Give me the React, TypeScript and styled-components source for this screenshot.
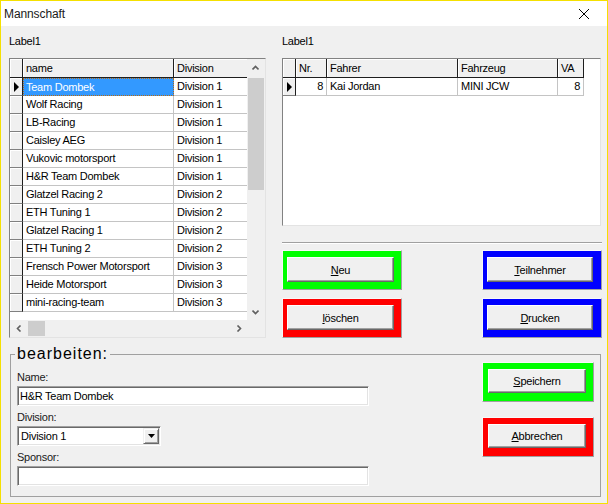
import React from 'react';
import styled, { createGlobalStyle } from 'styled-components';

const GlobalStyle = createGlobalStyle`
  html, body {
    margin: 0;
    padding: 0;
    background: #fff;
  }
  body {
    font-family: "Liberation Sans", Arial, sans-serif;
  }
  * {
    box-sizing: border-box;
  }
`;

const teams: [string, string][] = [
  ['Team Dombek', 'Division 1'],
  ['Wolf Racing', 'Division 1'],
  ['LB-Racing', 'Division 1'],
  ['Caisley AEG', 'Division 1'],
  ['Vukovic motorsport', 'Division 1'],
  ['H&R Team Dombek', 'Division 1'],
  ['Glatzel Racing 2', 'Division 2'],
  ['ETH Tuning 1', 'Division 2'],
  ['Glatzel Racing 1', 'Division 2'],
  ['ETH Tuning 2', 'Division 2'],
  ['Frensch Power Motorsport', 'Division 3'],
  ['Heide Motorsport', 'Division 3'],
  ['mini-racing-team', 'Division 3'],
];

function Arrow() {
  return (
    <svg width="5" height="10" viewBox="0 0 5 10">
      <polygon points="0,0 5,5 0,10" fill="#000" />
    </svg>
  );
}

function Chevron({ dir }: { dir: 'up' | 'down' | 'left' | 'right' }) {
  const pts = {
    up: '0.5,4.5 3.5,1.5 6.5,4.5',
    down: '0.5,1.5 3.5,4.5 6.5,1.5',
    left: '4.5,0.5 1.5,3.5 4.5,6.5',
    right: '1.5,0.5 4.5,3.5 1.5,6.5',
  }[dir];
  const horiz = dir === 'left' || dir === 'right';
  return (
    <svg width={horiz ? 6 : 7} height={horiz ? 7 : 6} viewBox={horiz ? '0 0 6 7' : '0 0 7 6'}>
      <polyline points={pts} fill="none" stroke="#606060" strokeWidth="1.6" />
    </svg>
  );
}

function App() {
  return (
    <>
      <GlobalStyle />
      <Window>
        <TitleBar>
          <Title>Mannschaft</Title>
          <svg width="10" height="10" viewBox="0 0 10 10">
            <line x1="0" y1="0" x2="10" y2="10" stroke="#000" strokeWidth="1" />
            <line x1="10" y1="0" x2="0" y2="10" stroke="#000" strokeWidth="1" />
          </svg>
        </TitleBar>
        <Client>
          <TopRow>
            <LeftCol>
              <Caption>Label1</Caption>
              <GridFrame $w={257} $h={280} $scroll>
                <GridBody>
                  <Row>
                    <IndicatorCell $head />
                    <HeadCell $w={151}>name</HeadCell>
                    <HeadCell $w={74}>Division</HeadCell>
                  </Row>
                  {teams.map(([name, div], i) => (
                    <Row key={name}>
                      <IndicatorCell>{i === 0 && <Arrow />}</IndicatorCell>
                      <DataCell $w={151} $selected={i === 0}>
                        {name}
                      </DataCell>
                      <DataCell $w={74}>{div}</DataCell>
                    </Row>
                  ))}
                </GridBody>
                <VScroll>
                  <ArrowBox>
                    <Chevron dir="up" />
                  </ArrowBox>
                  <VThumb />
                  <Spacer />
                  <ArrowBox>
                    <Chevron dir="down" />
                  </ArrowBox>
                </VScroll>
                <HScroll>
                  <ArrowBox>
                    <Chevron dir="left" />
                  </ArrowBox>
                  <HThumb />
                  <Spacer />
                  <ArrowBox>
                    <Chevron dir="right" />
                  </ArrowBox>
                </HScroll>
                <Corner />
              </GridFrame>
            </LeftCol>
            <RightCol>
              <Caption>Label1</Caption>
              <GridFrame $w={319} $h={168}>
                <GridBody>
                  <Row>
                    <IndicatorCell $head />
                    <HeadCell $w={31}>Nr.</HeadCell>
                    <HeadCell $w={131}>Fahrer</HeadCell>
                    <HeadCell $w={100}>Fahrzeug</HeadCell>
                    <HeadCell $w={26}>VA</HeadCell>
                  </Row>
                  <Row>
                    <IndicatorCell>
                      <Arrow />
                    </IndicatorCell>
                    <DataCell $w={31} $right>
                      8
                    </DataCell>
                    <DataCell $w={131}>Kai Jordan</DataCell>
                    <DataCell $w={100}>MINI JCW</DataCell>
                    <DataCell $w={26} $right>
                      8
                    </DataCell>
                  </Row>
                </GridBody>
              </GridFrame>
              <Separator />
              <ButtonRows>
                <ButtonRow>
                  <ColorFrame $color="#00ff00" $w={120}>
                    <WinButton $w={107} $h={25}>
                      <u>N</u>eu
                    </WinButton>
                  </ColorFrame>
                  <ColorFrame $color="#0000ff" $w={120}>
                    <WinButton $w={106} $h={25}>
                      <u>T</u>eilnehmer
                    </WinButton>
                  </ColorFrame>
                </ButtonRow>
                <ButtonRow>
                  <ColorFrame $color="#ff0000" $w={120}>
                    <WinButton $w={107} $h={25}>
                      <u>l</u>öschen
                    </WinButton>
                  </ColorFrame>
                  <ColorFrame $color="#0000ff" $w={120}>
                    <WinButton $w={106} $h={25}>
                      <u>D</u>rucken
                    </WinButton>
                  </ColorFrame>
                </ButtonRow>
              </ButtonRows>
            </RightCol>
          </TopRow>
          <GroupBox>
            <Legend>bearbeiten:</Legend>
            <GroupBody>
              <FormCol>
                <FieldLabel>Name:</FieldLabel>
                <TextBox $w={352} defaultValue="H&R Team Dombek" />
                <FieldLabel $gap>Division:</FieldLabel>
                <ComboBox>
                  <ComboText>Division 1</ComboText>
                  <DropButton>
                    <svg width="7" height="4" viewBox="0 0 7 4">
                      <polygon points="0,0 7,0 3.5,4" fill="#000" />
                    </svg>
                  </DropButton>
                </ComboBox>
                <FieldLabel $gap>Sponsor:</FieldLabel>
                <TextBox $w={352} defaultValue="" />
              </FormCol>
              <ActionCol>
                <ColorFrame $color="#00ff00" $w={112} $pad={6}>
                  <WinButton $w={98} $h={24}>
                    <u>S</u>peichern
                  </WinButton>
                </ColorFrame>
                <ColorFrame $color="#ff0000" $w={112} $pad={6}>
                  <WinButton $w={98} $h={24}>
                    <u>A</u>bbrechen
                  </WinButton>
                </ColorFrame>
              </ActionCol>
            </GroupBody>
          </GroupBox>
        </Client>
      </Window>
    </>
  );
}
export default App;

const Window = styled.div`
  width: 608px;
  height: 504px;
  border: 1px solid #f5e000;
  display: flex;
  flex-direction: column;
  overflow: hidden;
  font-size: 11px;
  letter-spacing: -0.25px;
  color: #000;
`;

const TitleBar = styled.div`
  height: 25px;
  flex: none;
  background: #fff;
  display: flex;
  align-items: center;
  justify-content: space-between;
  padding: 0 18px 0 3px;
`;

const Title = styled.div`
  font-size: 12px;
  letter-spacing: -0.1px;
  color: #1a1a1a;
`;

const Client = styled.div`
  flex: 1;
  background: #f0f0f0;
  padding: 0 5px 0 8px;
  display: flex;
  flex-direction: column;
`;

const TopRow = styled.div`
  display: flex;
  gap: 16px;
`;

const LeftCol = styled.div`
  width: 257px;
  display: flex;
  flex-direction: column;
`;

const RightCol = styled.div`
  width: 320px;
  display: flex;
  flex-direction: column;
`;

const Caption = styled.div`
  padding-top: 9px;
  line-height: 13px;
  margin-bottom: 10px;
`;

const GridFrame = styled.div<{ $w: number; $h: number; $scroll?: boolean }>`
  width: ${p => p.$w}px;
  height: ${p => p.$h}px;
  border: 1px solid;
  border-color: #828282 #e3e3e3 #e3e3e3 #828282;
  background: #fff;
  display: grid;
  grid-template-columns: ${p => (p.$scroll ? '237px 18px' : '1fr')};
  grid-template-rows: ${p => (p.$scroll ? '261px 17px' : '1fr')};
`;

const GridBody = styled.div`
  overflow: hidden;
  display: flex;
  flex-direction: column;
  background: #fff;
`;

const Row = styled.div`
  display: flex;
  flex: none;
`;

const IndicatorCell = styled.div<{ $head?: boolean }>`
  width: 13px;
  height: ${p => (p.$head ? 19 : 18)}px;
  flex: none;
  background: #f0f0f0;
  border-right: 1px solid #1e1e1e;
  border-bottom: 1px solid ${p => (p.$head ? '#1e1e1e' : '#808080')};
  box-shadow: inset 1px 1px 0 #fff;
  display: flex;
  align-items: center;
  justify-content: center;
`;

const HeadCell = styled.div<{ $w: number }>`
  width: ${p => p.$w}px;
  height: 19px;
  flex: none;
  background: #f0f0f0;
  border-right: 1px solid #1e1e1e;
  border-bottom: 1px solid #1e1e1e;
  box-shadow: inset 1px 1px 0 #fff;
  padding-left: 3px;
  line-height: 18px;
  white-space: nowrap;
  overflow: hidden;
`;

const DataCell = styled.div<{ $w: number; $right?: boolean; $selected?: boolean }>`
  width: ${p => p.$w}px;
  height: 18px;
  flex: none;
  border-right: 1px solid #c4c4c4;
  border-bottom: 1px solid #c4c4c4;
  padding: 0 3px;
  line-height: 17px;
  white-space: nowrap;
  overflow: hidden;
  text-align: ${p => (p.$right ? 'right' : 'left')};
  ${p =>
    p.$selected &&
    `
    background: #3399ff;
    color: #fff;
    border: 1px dotted #b86a10;
    padding: 0 2px;
    line-height: 16px;
  `}
`;

const VScroll = styled.div`
  grid-row: 1;
  grid-column: 2;
  background: #f0f0f0;
  display: flex;
  flex-direction: column;
`;

const HScroll = styled.div`
  grid-row: 2;
  grid-column: 1;
  background: #f0f0f0;
  display: flex;
`;

const Corner = styled.div`
  grid-row: 2;
  grid-column: 2;
  background: #f0f0f0;
`;

const ArrowBox = styled.div`
  width: 17px;
  height: 17px;
  flex: none;
  display: flex;
  align-items: center;
  justify-content: center;
`;

const VThumb = styled.div`
  margin: 2px 1px 0 1px;
  height: 112px;
  flex: none;
  background: #cdcdcd;
`;

const HThumb = styled.div`
  margin: 1px 0 1px 1px;
  width: 17px;
  flex: none;
  background: #cdcdcd;
`;

const Spacer = styled.div`
  flex: 1;
`;

const Separator = styled.div`
  height: 2px;
  margin: 16px 0 6px;
  border-top: 1px solid #a0a0a0;
  border-bottom: 1px solid #fff;
`;

const ButtonRows = styled.div`
  display: flex;
  flex-direction: column;
  gap: 8px;
`;

const ButtonRow = styled.div`
  display: flex;
  justify-content: space-between;
`;

const ColorFrame = styled.div<{ $color: string; $w: number; $pad?: number }>`
  width: ${p => p.$w}px;
  height: 40px;
  background: ${p => p.$color};
  border: 1px solid;
  border-color: #f8f8f8 #a0a0a0 #a0a0a0 #f8f8f8;
  padding: 6px 0 0 ${p => (p.$pad ?? 5) - 1}px;
`;

const WinButton = styled.button<{ $w: number; $h: number }>`
  width: ${p => p.$w}px;
  height: ${p => p.$h}px;
  display: block;
  padding: 0;
  margin: 0;
  background: #f0f0f0;
  border: 1px solid;
  border-color: #fff #696969 #696969 #fff;
  box-shadow: inset -1px -1px 0 #a0a0a0;
  font-family: "Liberation Sans", Arial, sans-serif;
  font-size: 11px;
  letter-spacing: -0.25px;
  color: #000;
  text-align: center;
`;

const GroupBox = styled.fieldset`
  margin: 8px 1px 0 1px;
  padding: 0 6px 10px 6px;
  border: 1px solid #a0a0a0;
  min-width: 0;
`;

const Legend = styled.legend`
  font-size: 16px;
  letter-spacing: 1px;
  line-height: 16px;
  padding: 0 2px;
  margin-left: -2px;
`;

const GroupBody = styled.div`
  display: flex;
  align-items: flex-start;
`;

const FormCol = styled.div`
  width: 352px;
  padding-top: 9px;
  display: flex;
  flex-direction: column;
  align-items: flex-start;
`;

const FieldLabel = styled.div<{ $gap?: boolean }>`
  line-height: 13px;
  margin-top: ${p => (p.$gap ? 5 : 0)}px;
  margin-bottom: 2px;
  color: #1a1a1a;
`;

const TextBox = styled.input<{ $w: number }>`
  width: ${p => p.$w}px;
  height: 20px;
  margin: 0;
  padding: 0 2px;
  background: #fff;
  border: 1px solid;
  border-color: #a0a0a0 #fff #fff #a0a0a0;
  box-shadow: inset 1px 1px 0 #696969, inset -1px -1px 0 #e3e3e3;
  font-family: "Liberation Sans", Arial, sans-serif;
  font-size: 11px;
  letter-spacing: -0.25px;
  color: #000;
  outline: none;
`;

const ComboBox = styled.div`
  width: 144px;
  height: 20px;
  background: #fff;
  border: 1px solid;
  border-color: #a0a0a0 #fff #fff #a0a0a0;
  box-shadow: inset 1px 1px 0 #696969, inset -1px -1px 0 #e3e3e3;
  display: flex;
  align-items: center;
  padding: 1px 1px 1px 0;
`;

const ComboText = styled.div`
  flex: 1;
  padding-left: 3px;
  line-height: 16px;
`;

const DropButton = styled.div`
  width: 16px;
  height: 16px;
  background: #f0f0f0;
  border: 1px solid;
  border-color: #f0f0f0 #696969 #696969 #f0f0f0;
  box-shadow: inset 1px 1px 0 #fff, inset -1px -1px 0 #a0a0a0;
  display: flex;
  align-items: center;
  justify-content: center;
`;

const ActionCol = styled.div`
  margin-left: auto;
  display: flex;
  flex-direction: column;
  gap: 15px;
`;
